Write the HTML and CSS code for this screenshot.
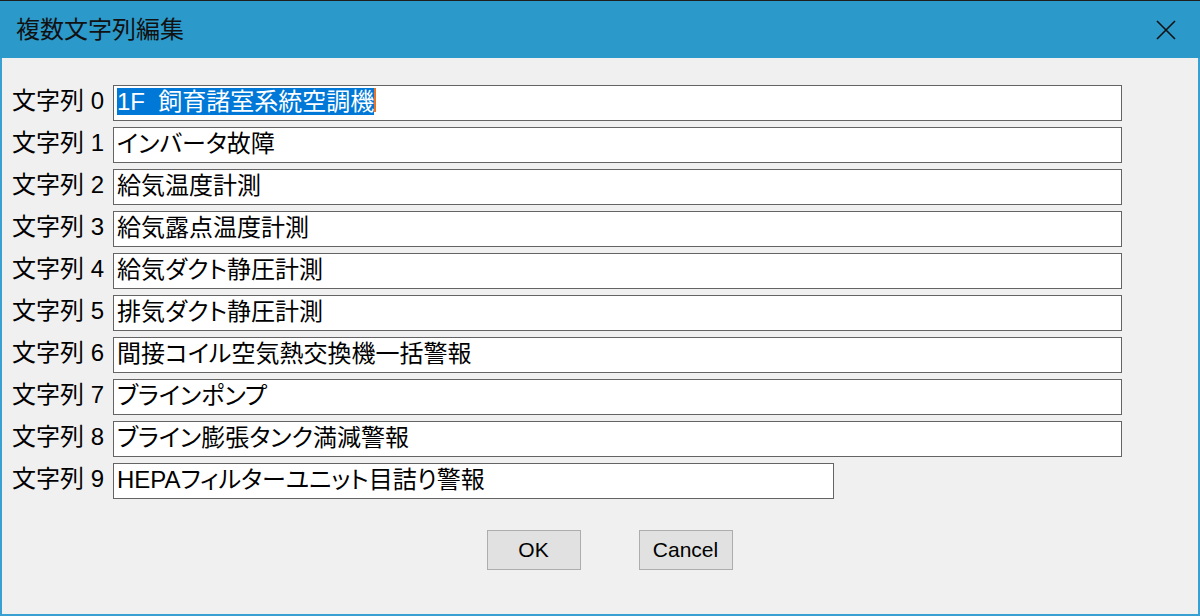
FILE: index.html
```html
<!DOCTYPE html>
<html lang="ja">
<head>
  <meta charset="UTF-8">
  <title>複数文字列編集</title>
  <link rel="stylesheet" href="styles.css">
</head>
<body>
  <div class="window">
    <div class="titlebar">
      <span class="title">複数文字列編集</span>
      <span class="close">
        <svg width="20" height="20" viewBox="0 0 20 20">
          <path d="M1 1 L19 19 M19 1 L1 19" stroke="#111" stroke-width="1.6" fill="none"/>
        </svg>
      </span>
    </div>

    <div class="content">
      <div class="rows">
        <div class="row">
          <span class="label">文字列 0</span>
          <div class="field"><span class="selected">1F&nbsp; 飼育諸室系統空調機</span><span class="caret"></span></div>
        </div>
        <div class="row">
          <span class="label">文字列 1</span>
          <div class="field">インバータ故障</div>
        </div>
        <div class="row">
          <span class="label">文字列 2</span>
          <div class="field">給気温度計測</div>
        </div>
        <div class="row">
          <span class="label">文字列 3</span>
          <div class="field">給気露点温度計測</div>
        </div>
        <div class="row">
          <span class="label">文字列 4</span>
          <div class="field">給気ダクト静圧計測</div>
        </div>
        <div class="row">
          <span class="label">文字列 5</span>
          <div class="field">排気ダクト静圧計測</div>
        </div>
        <div class="row">
          <span class="label">文字列 6</span>
          <div class="field">間接コイル空気熱交換機一括警報</div>
        </div>
        <div class="row">
          <span class="label">文字列 7</span>
          <div class="field">ブラインポンプ</div>
        </div>
        <div class="row">
          <span class="label">文字列 8</span>
          <div class="field">ブライン膨張タンク満減警報</div>
        </div>
        <div class="row">
          <span class="label">文字列 9</span>
          <div class="field short">HEPAフィルターユニット目詰り警報</div>
        </div>
      </div>

      <div class="buttons">
        <button class="btn">OK</button>
        <button class="btn">Cancel</button>
      </div>
    </div>
  </div>
</body>
</html>
```

FILE: styles.css
```css
* {
  box-sizing: border-box;
}

body {
  margin: 0;
  font-family: "Liberation Sans", "Noto Sans CJK JP", sans-serif;
  color: #000;
  background: #1e1e1e;
}

.window {
  width: 1200px;
  height: 615px;
  margin-top: 1px;
  border: 2px solid #3aa0d2;
  border-top: none;
  background: #f0f0f0;
  display: flex;
  flex-direction: column;
}

.titlebar {
  height: 57px;
  margin: 0 -2px;
  background: #2b99ca;
  display: flex;
  align-items: center;
  justify-content: space-between;
  padding: 0 24px 0 16px;
}

.title {
  font-size: 24px;
  line-height: 30px;
  color: #111;
}

.close {
  display: flex;
}

.content {
  padding: 27px 0 0 10px;
}

.rows {
  display: flex;
  flex-direction: column;
  gap: 6px;
}

.row {
  display: flex;
  align-items: center;
  height: 36px;
}

.label {
  width: 101px;
  font-size: 24px;
  line-height: 30px;
  margin-top: -4px;
  white-space: nowrap;
}

/* kana in the original font are narrower than kanji */
.field {
  width: 1009px;
  height: 36px;
  border: 1px solid #646464;
  background: #fff;
  padding: 2px 0 0 3px;
  font-size: 24px;
  line-height: 27px;
  font-feature-settings: "palt";
  white-space: nowrap;
  display: flex;
  align-items: flex-start;
}

.field.short {
  width: 721px;
}

.selected {
  background: #0078d7;
  color: #fff;
}

.caret {
  width: 2px;
  height: 24px;
  background: #e8742a;
}

.buttons {
  display: flex;
  justify-content: center;
  gap: 58px;
  padding-left: 9px;
  margin-top: 31px;
}

.btn {
  width: 94px;
  height: 40px;
  border: 1px solid #adadad;
  background: #e1e1e1;
  font-family: "Liberation Sans", sans-serif;
  font-size: 21px;
  color: #000;
  padding: 0;
}
```
